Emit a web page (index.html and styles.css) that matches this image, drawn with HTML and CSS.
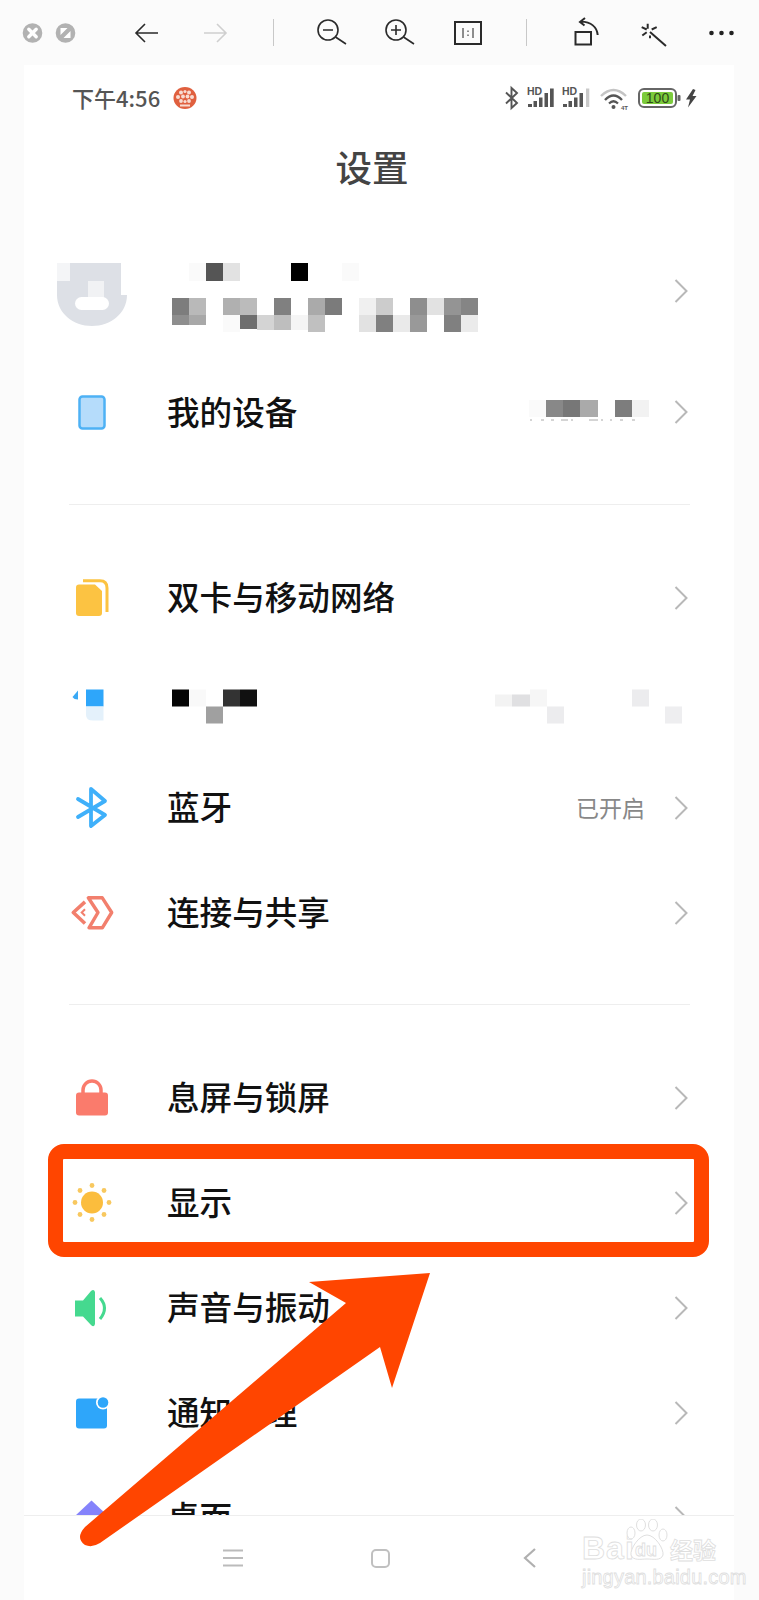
FILE: index.html
```html
<!DOCTYPE html>
<html lang="zh-CN">
<head>
<meta charset="utf-8">
<title>设置</title>
<link rel="stylesheet" href="styles.css">
</head>
<body>
<svg class="defs" width="0" height="0" aria-hidden="true">
  <symbol id="chev" viewBox="0 0 14 24"><polyline points="1.5 1 12.5 12 1.5 23"/></symbol>
</svg>
<div class="app">
  <header class="toolbar">
    <div class="win-btns">
      <svg class="win" viewBox="0 0 33 36"><circle cx="16.5" cy="18" r="9.8" fill="#b2b2b2"/><path d="M12.8 14.300 L20.200 21.700 M20.200 14.300 L12.800 21.700" stroke="#fff" stroke-width="3.400" stroke-linecap="round"/></svg>
      <svg class="win" viewBox="0 0 33 36"><circle cx="16.5" cy="18" r="9.8" fill="#b2b2b2"/><path d="M11.500 13 H18.500 L11.500 20 Z M21.500 23 H14.500 L21.500 16 Z" fill="#fff"/></svg>
    </div>
    <svg class="tb" viewBox="0 0 36 36"><path d="M7 18 H29 M16 9 L7 18 L16 27" class="ink"/></svg>
    <svg class="tb" viewBox="0 0 36 36"><path d="M7 18 H29 M20 9 L29 18 L20 27" class="ink ink-off"/></svg>
    <div class="tb-sep"></div>
    <svg class="tb" viewBox="0 0 36 36"><circle cx="14" cy="15" r="10" class="ink"/><path d="M9 15 H19 M21.5 22 L32 29" class="ink"/></svg>
    <svg class="tb" viewBox="0 0 36 36"><circle cx="14" cy="15" r="10" class="ink"/><path d="M9 15 H19 M14 10 V20 M21.5 22 L32 29" class="ink"/></svg>
    <svg class="tb" viewBox="0 0 36 36"><rect x="5" y="7" width="26" height="22" class="ink ink-bold"/><path d="M13 13 V23 M23 13 V23 M18 15.5 V17 M18 19.5 V21" class="ink-thin"/></svg>
    <div class="tb-sep tb-sep-b"></div>
    <svg class="tb" viewBox="0 0 36 36"><rect x="6.500" y="17" width="15.500" height="12.500" class="ink ink-bold"/><path d="M28.700 20 C28 12 22 7 12 6.500 M16 3 L11 7 L15.500 10.500" class="ink ink-bold"/></svg>
    <svg class="tb" viewBox="0 0 36 36"><path d="M13 17 L29 31 M10.700 8.800 V13.800 M4.700 12.200 L9.700 14.500 M5.300 20.500 L9.700 17.200 M19.700 12.200 L14.700 14.500 M13 20.500 V23.200" class="ink ink-bold"/></svg>
    <svg class="tb" viewBox="0 0 36 36"><circle cx="6.5" cy="18" r="2.3" fill="#222"/><circle cx="16.5" cy="18" r="2.3" fill="#222"/><circle cx="26.5" cy="18" r="2.3" fill="#222"/></svg>
  </header>

  <main class="screen">
    <div class="statusbar">
      <div class="status-left">
        <span class="time">下午4:56</span>
        <svg class="emblem" viewBox="0 0 24 22"><ellipse cx="12" cy="11" rx="11.500" ry="11" fill="#e0603f"/><g fill="#f8dcd2"><circle cx="8" cy="5.500" r="2"/><circle cx="12" cy="4.500" r="1.600"/><circle cx="16" cy="5.500" r="2"/><circle cx="5" cy="10" r="2"/><circle cx="10" cy="9.500" r="1.900"/><circle cx="14.500" cy="9.500" r="1.900"/><circle cx="19" cy="10" r="2"/><circle cx="8" cy="14" r="1.900"/><circle cx="12" cy="14.500" r="1.600"/><circle cx="16" cy="14" r="1.900"/><rect x="7" y="17.500" width="10" height="2"/></g></svg>
      </div>
      <svg class="status-icons" viewBox="500 80 200 36">
        <path d="M506 92.500 L517 103 L511.500 108 V88 L517 93 L506 103.500" fill="none" stroke="#555" stroke-width="1.900"/>
        <text x="527" y="95" class="hd">HD</text>
        <path d="M528 104h4v3h-4z M533.500 101h3.500v6h-3.500z M539 97.500h3.500v9.500H539z M544.500 93h3.500v14h-3.500z M550 88.500h3.700v18.500H550z" fill="#555"/>
        <text x="562" y="95" class="hd">HD</text>
        <path d="M563 104h4v3h-4z M568.500 101h3.500v6h-3.500z M574 97.500h3.500v9.500H574z M579.500 93h3.500v14h-3.500z" fill="#555"/>
        <path d="M586 88.500h3.300v18.500H586z" fill="#c9c9c9"/>
        <path d="M601 96 Q613.500 84 626 96" fill="none" stroke="#c4c4c4" stroke-width="2.400"/>
        <path d="M605 100 Q613.500 91 622 100" fill="none" stroke="#555" stroke-width="2.400"/>
        <path d="M609 103.500 Q613.500 99 618 103.500" fill="none" stroke="#555" stroke-width="2.200"/>
        <circle cx="613.500" cy="107" r="2" fill="#555"/>
        <text x="621" y="110" class="tiny">4T</text>
        <rect x="639" y="89" width="37" height="18" rx="5" fill="#fff" stroke="#666" stroke-width="2"/>
        <rect x="642" y="92" width="31" height="12" rx="2" fill="#7ccb3c"/>
        <text x="657.500" y="103" class="batt">100</text>
        <rect x="677.500" y="95" width="3" height="6" rx="1" fill="#666"/>
        <path d="M693 89 L686 99.500 H690 L688 107.500 L696.500 96 H692.500 L695.500 90 Z" fill="#444"/>
      </svg>
    </div>
    <h1 class="title">设置</h1>

    <div class="list">
      <div class="group">
        <div class="row row-profile">
          <svg class="icon icon-tall" viewBox="57 250 70 82">
            <path d="M57 263 H70 V281 H57 Z" fill="#f4f5f7"/>
            <path d="M70 263 H121 V295 H127 C127 313 111 326 92 326 C73 326 57 313 57 295 V281 H70 Z" fill="#dde0e6"/>
            <rect x="88" y="281" width="16" height="18" fill="#f1f2f4"/>
            <rect x="75" y="297" width="34" height="13" rx="6.500" fill="#fff"/>
          </svg>
          <svg class="mosaic-main" viewBox="167 250 311 82">
            <rect x="189" y="263" width="17" height="18" fill="#fafafa"/><rect x="206" y="263" width="17" height="18" fill="#555"/><rect x="223" y="263" width="17" height="18" fill="#e2e2e2"/><rect x="291" y="263" width="17" height="18" fill="#000"/><rect x="342" y="263" width="17" height="18" fill="#fafafa"/>
            <rect x="172" y="298" width="17" height="17" fill="#7d7d7d"/><rect x="189" y="298" width="17" height="17" fill="#b9b9b9"/><rect x="223" y="298" width="17" height="17" fill="#b0b0b0"/><rect x="240" y="298" width="17" height="17" fill="#bbb"/><rect x="274" y="298" width="17" height="17" fill="#808080"/><rect x="308" y="298" width="17" height="17" fill="#aaa"/><rect x="325" y="298" width="17" height="17" fill="#7b7b7b"/><rect x="359" y="298" width="17" height="17" fill="#f0f0f0"/><rect x="376" y="298" width="17" height="17" fill="#ccc"/><rect x="410" y="298" width="17" height="17" fill="#8e8e8e"/><rect x="427" y="298" width="17" height="17" fill="#e2e2e2"/><rect x="444" y="298" width="17" height="17" fill="#949494"/><rect x="461" y="298" width="17" height="17" fill="#858585"/>
            <rect x="172" y="315" width="17" height="10" fill="#8e8e8e"/><rect x="189" y="315" width="17" height="10" fill="#a8a8a8"/><rect x="223" y="315" width="17" height="17" fill="#fafafa"/><rect x="240" y="315" width="17" height="14" fill="#6e6e6e"/><rect x="257" y="315" width="17" height="15" fill="#d4d4d4"/><rect x="274" y="315" width="17" height="15" fill="#bebebe"/><rect x="291" y="315" width="17" height="15" fill="#f5f5f5"/><rect x="308" y="315" width="17" height="17" fill="#c0c0c0"/><rect x="359" y="315" width="17" height="17" fill="#e2e2e2"/><rect x="376" y="315" width="17" height="17" fill="#808080"/><rect x="393" y="315" width="17" height="17" fill="#eaeaea"/><rect x="410" y="315" width="17" height="17" fill="#999"/><rect x="444" y="315" width="17" height="17" fill="#808080"/><rect x="461" y="315" width="17" height="17" fill="#ebebeb"/>
          </svg>
          <svg class="chevron"><use href="#chev"/></svg>
        </div>
        <div class="row row-device">
          <svg class="icon" viewBox="0 0 70 70"><rect x="22.500" y="19.500" width="25" height="32" rx="3" fill="#b5dcfb" stroke="#4db1f5" stroke-width="2.500"/></svg>
          <span class="label">我的设备</span>
          <svg class="mosaic-device" viewBox="529 392 120 40">
            <rect x="529" y="400" width="17" height="17" fill="#fafafa"/><rect x="546" y="400" width="17" height="17" fill="#888"/><rect x="563" y="400" width="17" height="17" fill="#777"/><rect x="580" y="400" width="18" height="17" fill="#aaa"/><rect x="615" y="400" width="17" height="17" fill="#7d7d7d"/><rect x="632" y="400" width="17" height="17" fill="#f2f2f2"/>
            <path d="M530 420h2M541 420h3M551 420h3M561 420h7M571 420h2M589 420h9M601 420h2M610 420h2M620 420h3M632 420h3" stroke="#aaa" stroke-width="1"/>
          </svg>
          <svg class="chevron"><use href="#chev"/></svg>
        </div>
      </div>

      <hr class="divider">

      <div class="group">
        <div class="row">
          <svg class="icon" viewBox="0 0 70 70"><path d="M26 17.800 H43 Q50 17.800 50 25 V49" fill="none" stroke="#fcc342" stroke-width="3"/><path d="M22 21.500 H38 L45 28 V50 Q45 53 42 53 H22 Q19 53 19 50 V24.500 Q19 21.500 22 21.500 Z" fill="#fcc342"/></svg>
          <span class="label">双卡与移动网络</span>
          <svg class="chevron"><use href="#chev"/></svg>
        </div>
        <div class="row">
          <svg class="icon" viewBox="0 0 70 70"><rect x="29" y="21.500" width="17.500" height="17" fill="#2ea6fa"/><path d="M29 38.500 H46.500 V52.500 H36 Q29 52.500 29 47 Z" fill="#e4f1fb"/><path d="M21 22.500 L15.500 29 Q17 31.500 21 31.500 Z" fill="#3aa9f5"/></svg>
          <svg class="mosaic-wifi" viewBox="167 667.500 100 70">
            <rect x="172" y="689" width="17" height="17" fill="#050505"/><rect x="189" y="689" width="17" height="17" fill="#f9f9f9"/><rect x="223" y="689" width="17" height="17" fill="#333"/><rect x="240" y="689" width="17" height="17" fill="#111"/><rect x="206" y="706" width="17" height="17" fill="#a0a0a0"/>
          </svg>
          <svg class="mosaic-wifi-right" viewBox="495 667.500 193 70">
            <rect x="495" y="694" width="17" height="12" fill="#f3f3f3"/><rect x="512" y="694" width="18" height="12" fill="#e0e0e2"/><rect x="530" y="689" width="17" height="17" fill="#f6f6f6"/><rect x="632" y="689" width="17" height="17" fill="#ececee"/><rect x="547" y="706" width="17" height="17" fill="#ececee"/><rect x="665" y="706" width="17" height="17" fill="#eeeef0"/>
          </svg>
        </div>
        <div class="row">
          <svg class="icon" viewBox="0 0 70 70"><path d="M21 26 L48 42 L34 53 V16 L48 28 L21 44" fill="none" stroke="#3fb0fa" stroke-width="3.800" stroke-linecap="round" stroke-linejoin="round"/></svg>
          <span class="label">蓝牙</span>
          <span class="value">已开启</span>
          <svg class="chevron chevron-after-value"><use href="#chev"/></svg>
        </div>
        <div class="row">
          <svg class="icon" viewBox="0 0 70 70"><path d="M28 23.800 L16.300 34.500 L28 45.500" fill="none" stroke="#f27f6d" stroke-width="3.600" stroke-linejoin="round"/><path d="M28 31.200 L24.700 34.500 L28 37.800" fill="none" stroke="#f27f6d" stroke-width="2"/><path d="M31.300 19.800 H45.300 L54.700 34.500 L45.300 49.800 H32 L41 34.500 Z" fill="none" stroke="#f27f6d" stroke-width="3.400" stroke-linejoin="round"/></svg>
          <span class="label">连接与共享</span>
          <svg class="chevron"><use href="#chev"/></svg>
        </div>
      </div>

      <hr class="divider divider-wide">

      <div class="group">
        <div class="row">
          <svg class="icon" viewBox="0 0 70 70"><path d="M26 30 V27 A9 9 0 0 1 44 27 V30" fill="none" stroke="#fa7b6c" stroke-width="3.500"/><rect x="19" y="29.500" width="32" height="23" rx="3" fill="#fa7b6c"/></svg>
          <span class="label">息屏与锁屏</span>
          <svg class="chevron"><use href="#chev"/></svg>
        </div>
        <div class="row">
          <svg class="icon" viewBox="0 0 70 70"><circle cx="35" cy="34.500" r="11" fill="#fbbd3d"/><g fill="#f8c85f"><circle cx="35" cy="17.500" r="2.400"/><circle cx="35" cy="51.500" r="2.400"/><circle cx="18" cy="34.500" r="2.400"/><circle cx="52" cy="34.500" r="2.400"/><circle cx="23" cy="22.500" r="2.400"/><circle cx="47" cy="22.500" r="2.400"/><circle cx="23" cy="46.500" r="2.400"/><circle cx="47" cy="46.500" r="2.400"/></g></svg>
          <span class="label">显示</span>
          <svg class="chevron"><use href="#chev"/></svg>
        </div>
        <div class="row">
          <svg class="icon" viewBox="0 0 70 70"><path d="M18 27.500 H26 L34 18 Q37 15.500 38 19 V51 Q37 55 34 52 L26 43.500 H18 Z" fill="#45d98f"/><path d="M43 25 Q52 35 43 46" fill="none" stroke="#45d98f" stroke-width="3"/></svg>
          <span class="label">声音与振动</span>
          <svg class="chevron"><use href="#chev"/></svg>
        </div>
        <div class="row">
          <svg class="icon" viewBox="0 0 70 70"><rect x="19" y="20.500" width="31" height="30" rx="3" fill="#2ea6fa"/><circle cx="46" cy="24.500" r="7" fill="#fff"/><circle cx="46" cy="24.500" r="5.300" fill="#2ea6fa"/></svg>
          <span class="label">通知管理</span>
          <svg class="chevron"><use href="#chev"/></svg>
        </div>
        <div class="row">
          <svg class="icon" viewBox="0 0 70 70"><path d="M34.500 17.500 L51 33 V36 L34.500 51 L18 36 V33 Z" fill="#8583fb"/></svg>
          <span class="label">桌面</span>
          <svg class="chevron"><use href="#chev"/></svg>
        </div>
      </div>
    </div>

    <nav class="navbar">
      <svg class="nav-menu" viewBox="0 0 20 18"><path d="M0 1.500 H20 M0 9 H20 M0 16.500 H20" fill="none" stroke="#bbb" stroke-width="1.800"/></svg>
      <div class="nav-home"></div>
      <svg class="nav-back" viewBox="0 0 13 20"><polyline points="12 1 2 10 12 19" fill="none" stroke="#b0b0b0" stroke-width="2.200"/></svg>
    </nav>
  </main>

  <div class="highlight"></div>
  <svg class="arrow" viewBox="0 0 759 1600"><path d="M430 1273 L309 1282 L346 1303 L85 1527 Q 75 1538 85 1545 Q 92 1548 100 1543 L380 1347 L392 1388 Z" fill="#ff4500"/></svg>
  <div class="watermark">
    <div class="wm-top">
      <span class="wm-bai">Bai</span>
      <span class="wm-paw">
        <svg class="wm-paw-art" viewBox="0 0 42 42"><g fill="#fff" stroke="#e0e0e0" stroke-width="1"><ellipse cx="5" cy="14" rx="4" ry="6"/><ellipse cx="15" cy="6" rx="4.500" ry="6"/><ellipse cx="27" cy="6" rx="4.500" ry="6"/><ellipse cx="37" cy="16" rx="4" ry="6"/><path d="M21 16 C13 16 4 30 5 36 C7 42 15 40 21 40 C27 40 35 42 37 36 C38 30 29 16 21 16 Z"/></g></svg>
        <span class="wm-du">du</span>
      </span>
      <span class="wm-cn">经验</span>
    </div>
    <div class="wm-url">jingyan.baidu.com</div>
  </div>
</div>
</body>
</html>
```

FILE: styles.css
```css
* { box-sizing: border-box; }
html, body { margin: 0; padding: 0; }
body {
  width: 759px;
  height: 1600px;
  overflow: hidden;
  background: #fbfbfb;
  font-family: "Noto Sans CJK SC", "Noto Sans", sans-serif;
}
.defs { position: absolute; }
.app { position: relative; width: 759px; height: 1600px; display: flex; flex-direction: column; }

/* toolbar */
.toolbar { height: 65px; flex: none; display: flex; align-items: center; gap: 32px; padding-left: 16px; }
.win-btns { display: flex; width: 66px; margin-right: 15px; }
.win { width: 33px; height: 36px; flex: none; }
.tb { width: 36px; height: 36px; flex: none; }
.tb-sep { width: 18px; height: 27px; flex: none; display: flex; justify-content: center; margin-left: -1px; }
.tb-sep-b { margin-right: 2px; }
.tb-sep::before { content: ""; width: 1px; background: #c8c8c8; }
.ink { fill: none; stroke: #2a2a2a; stroke-width: 1.6; }
.ink-bold { stroke-width: 2; }
.ink-off { stroke: #cfcfcf; }
.ink-thin { fill: none; stroke: #444; stroke-width: 1.2; }

/* phone screen */
.screen { width: 710px; margin-left: 24px; flex: 1; min-height: 0; display: flex; flex-direction: column; background: #fff; }
.statusbar { height: 66px; flex: none; display: flex; align-items: center; justify-content: space-between; padding: 0 34px 0 48px; }
.status-left { display: flex; align-items: center; gap: 13px; }
.time { font-size: 22px; font-weight: 500; color: #555; line-height: 24px; padding-bottom: 2px; }
.emblem { width: 24px; height: 22px; }
.status-icons { width: 200px; height: 36px; }
.hd { font: 700 10.5px "Liberation Sans", sans-serif; fill: #555; }
.tiny { font: 700 6px "Liberation Sans", sans-serif; fill: #555; }
.batt { font: 400 14px "Liberation Sans", sans-serif; fill: #2e4a18; text-anchor: middle; }
.title { height: 76px; flex: none; margin: 0; padding-right: 14px; text-align: center; font-size: 36.5px; font-weight: 500; line-height: 72px; color: #444; }

/* list */
.list { flex: 1; min-height: 0; overflow: hidden; padding-top: 22px; }
.row { height: 105px; display: flex; align-items: center; padding: 0 46px 0 33px; }
.row-profile { height: 124px; }
.row-device { height: 118px; }
.icon { width: 70px; height: 70px; flex: none; margin-right: 40px; }
.icon-tall { height: 82px; }
.label { font-size: 32.6px; font-weight: 500; color: #111; line-height: 40px; padding-bottom: 3px; white-space: nowrap; }
.value { margin-left: auto; font-size: 23px; color: #888; line-height: 30px; padding-bottom: 2px; }
.chevron { width: 14px; height: 24px; flex: none; margin-left: auto; fill: none; stroke: #b8b8b8; stroke-width: 2; }
.chevron-after-value { margin-left: 29px; }
.mosaic-main { width: 311px; height: 82px; flex: none; }
.mosaic-device { width: 120px; height: 40px; flex: none; margin-left: auto; margin-right: 25px; }
.mosaic-device + .chevron { margin-left: 0; }
.mosaic-wifi { width: 100px; height: 70px; flex: none; }
.mosaic-wifi-right { width: 193px; height: 70px; flex: none; margin-left: auto; }
.divider { height: 1px; margin: 33px 44px 40px 45px; border: 0; background: #eeeeee; }
.divider-wide { margin-top: 39px; }

/* nav */
.navbar { height: 85px; flex: none; position: relative; border-top: 1px solid #eeeeee; display: flex; align-items: center; padding-left: 199px; }
.nav-menu { width: 20px; height: 18px; flex: none; }
.nav-home { width: 19px; height: 19px; margin-left: 128px; flex: none; border: 2.5px solid #c0c0c0; border-radius: 5px; }
.nav-back { width: 13px; height: 20px; margin-left: 133px; flex: none; }

/* annotations on top of the screenshot */
.highlight { position: absolute; left: 48px; top: 1144px; width: 661px; height: 113px; border: 15px solid #ff4500; border-radius: 16px; }
.arrow { position: absolute; left: 0; top: 0; width: 759px; height: 1600px; pointer-events: none; }
.watermark { position: absolute; left: 582px; top: 1518px; width: 136px; }
.wm-top { display: flex; align-items: flex-end; height: 46px; }
.wm-bai, .wm-du, .wm-cn, .wm-url { color: transparent; -webkit-text-stroke: 0.8px #dedede; }
.wm-bai { font: 700 32px/32px "Liberation Sans", sans-serif; width: 42px; letter-spacing: 1px; }
.wm-paw { position: relative; width: 46px; height: 46px; flex: none; }
.wm-paw-art { position: absolute; left: 2px; top: 1px; width: 42px; height: 42px; }
.wm-du { position: absolute; left: 11px; top: 22px; font: 700 18px/20px "Liberation Sans", sans-serif; }
.wm-cn { font-size: 23px; line-height: 30px; font-weight: 700; white-space: nowrap; }
.wm-url { font: 400 20px/20px "Liberation Sans", sans-serif; margin-top: 3px; white-space: nowrap; letter-spacing: .2px; }
```
